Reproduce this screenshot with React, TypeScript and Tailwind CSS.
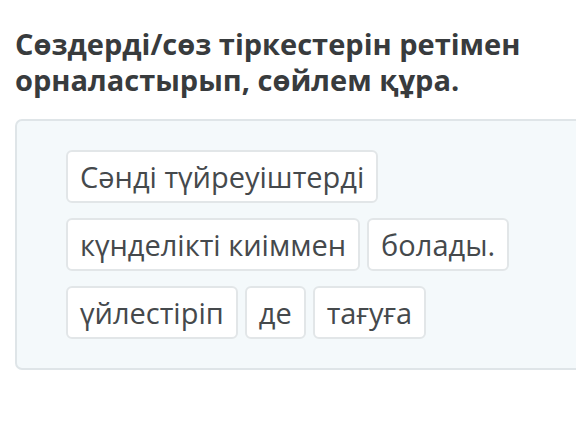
const words = [
  "Сәнді түйреуіштерді",
  "күнделікті киіммен",
  "болады.",
  "үйлестіріп",
  "де",
  "тағуға",
];

export default function App() {
  return (
    <div className="w-[576px] h-[441px] overflow-hidden bg-white font-['Open_Sans',sans-serif]">
      <h1 className="pl-[15px] pt-[26px] text-[29px] font-bold leading-[36px] text-[#383b3d]">
        Сөздерді/сөз тіркестерін ретімен
        <br />
        орналастырып, сөйлем құра.
      </h1>
      <div className="ml-[15px] mt-[21px] w-[600px] rounded-[7px] border-2 border-[#dfe5e8] bg-[#f4f9fb] pl-[49px] pr-[100px] py-[29px]">
        <div className="flex flex-wrap gap-x-[7px] gap-y-[15px]">
          {words.map((w) => (
            <div
              key={w}
              className="rounded-[6px] border-2 border-[#e2e6e8] bg-white px-[12px] py-[5px] text-[29px] leading-[39px] text-[#45494c]"
            >
              {w}
            </div>
          ))}
        </div>
      </div>
    </div>
  );
}
